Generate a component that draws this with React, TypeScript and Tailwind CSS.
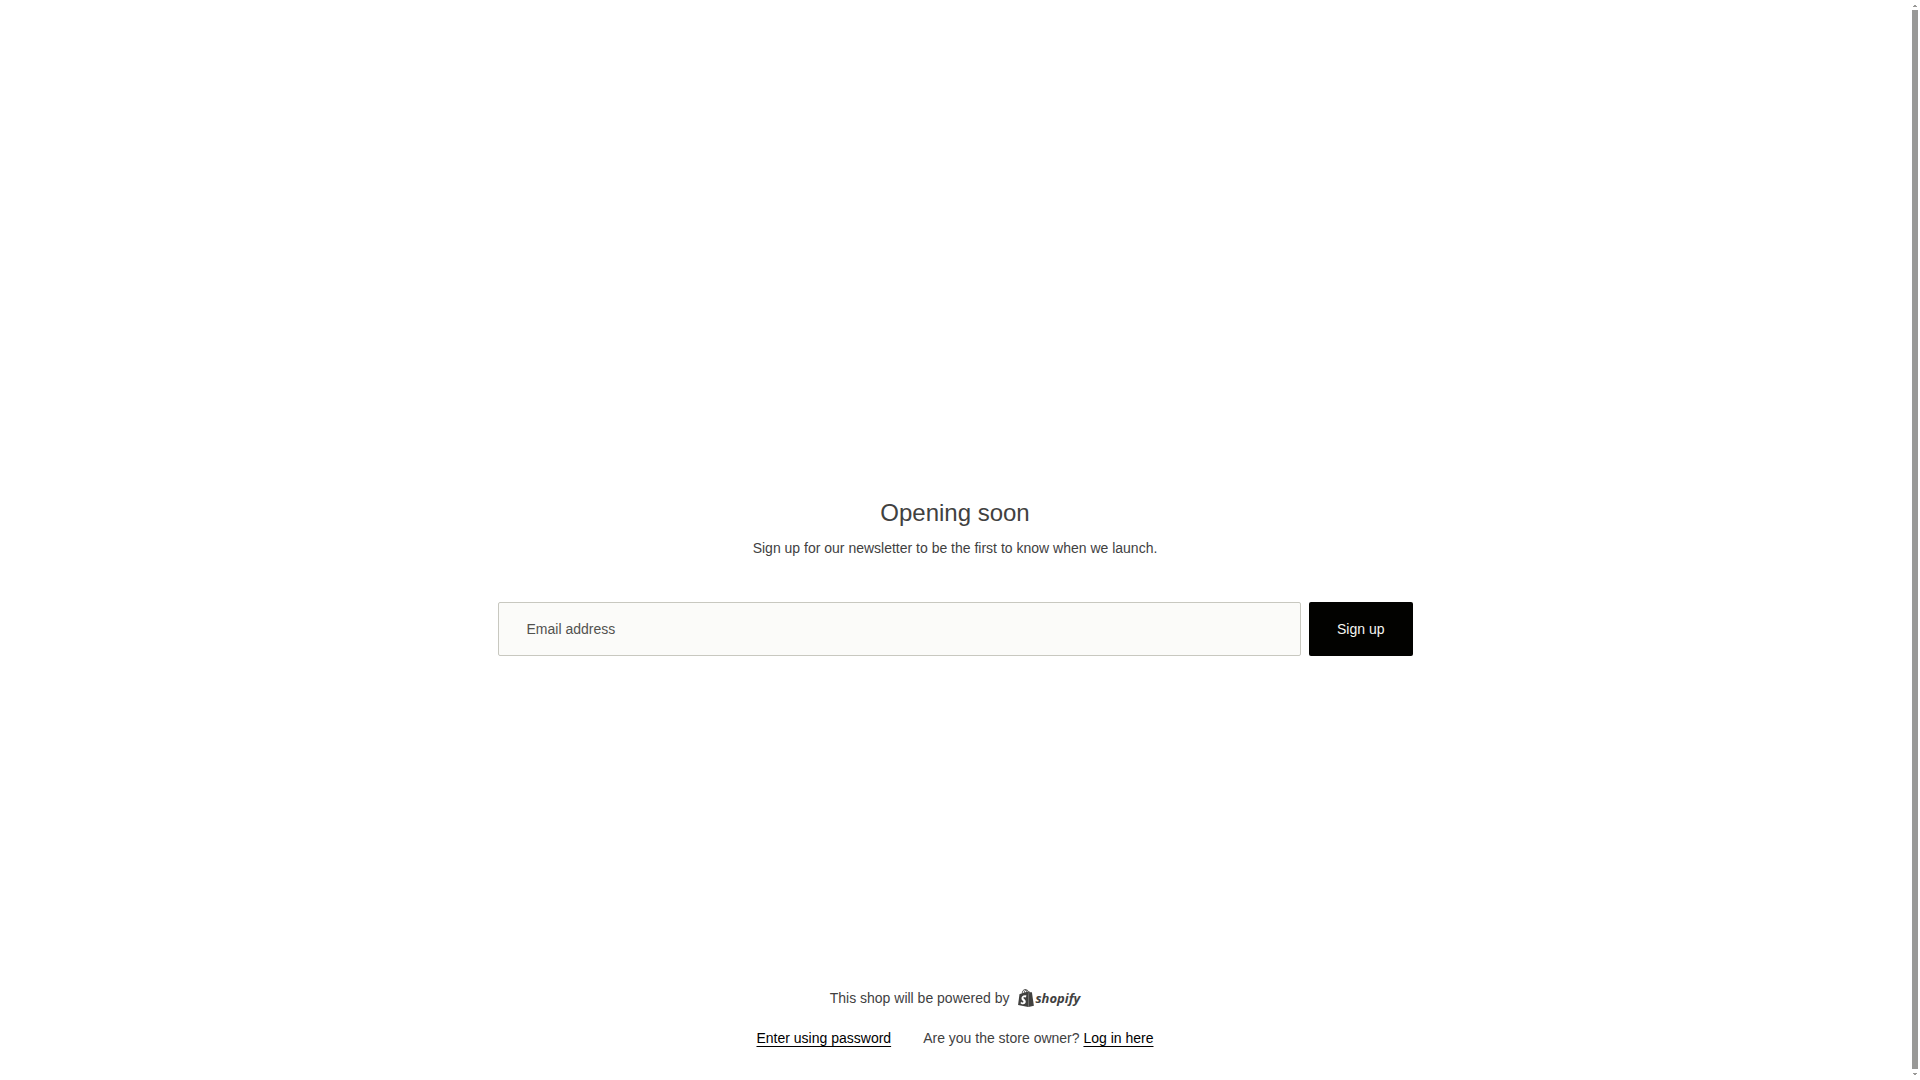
import { SiShopify } from "react-icons/si";

function Scrollbar() {
  return (
    <div aria-hidden="true" className="flex w-[10px] shrink-0 flex-col items-center">
      <svg width="4" height="10" viewBox="0 0 4 10" fill="#999997">
        <path d="M1 5h2v1h1v1H0V6h1z" />
      </svg>
      <div className="w-[6px] flex-1 bg-[#999997]" />
      <svg width="4" height="11" viewBox="0 0 4 11" fill="#999997">
        <path d="M0 4h4v1H3v1H1V5H0z" />
      </svg>
    </div>
  );
}

export default function App() {
  return (
    <div className="flex h-screen bg-white font-['Liberation_Sans',sans-serif] text-sm text-[#41413f]">
      <div className="flex flex-1 flex-col items-center px-4 pb-[30px]">
        <main className="flex w-full max-w-[915px] flex-1 flex-col items-center justify-center pt-[166px]">
          <h1 className="text-2xl leading-8">Opening soon</h1>
          <p className="mt-2 text-center text-sm leading-[22px]">
            Sign up for our newsletter to be the first to know when we launch.
          </p>
          <form className="mt-[43px] flex w-full gap-2" onSubmit={(e) => e.preventDefault()}>
            <input
              type="email"
              aria-label="Email address"
              placeholder="Email address"
              className="h-[54px] min-w-0 flex-1 rounded-[2px] border border-[#c8c8c0] bg-[#fbfbf9] px-7 placeholder:text-[#52524f]"
            />
            <button type="submit" className="h-[54px] rounded-[2px] bg-[#020200] px-7 text-[#f6f6f2]">
              Sign up
            </button>
          </form>
        </main>
        <footer className="flex flex-col items-center gap-4">
          <p className="flex items-center gap-2 leading-6">
            This shop will be powered by
            <a href="#shopify" aria-label="Shopify" className="flex items-center">
              <SiShopify size={18} />
              <span className="font-['Open_Sans',sans-serif] text-[13px] leading-6 font-bold italic">
                shopify
              </span>
            </a>
          </p>
          <div className="flex items-center gap-8 leading-6">
            <button type="button" className="text-black underline underline-offset-3">
              Enter using password
            </button>
            <p>
              Are you the store owner?{" "}
              <a href="#login" className="text-black underline underline-offset-3">
                Log in here
              </a>
            </p>
          </div>
        </footer>
      </div>
      <Scrollbar />
    </div>
  );
}
